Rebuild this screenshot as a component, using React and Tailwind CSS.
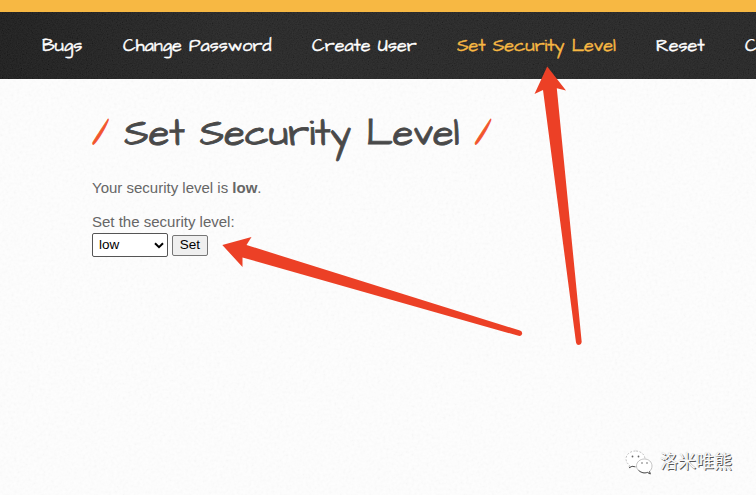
import React from "react";

const hand = "font-['Architects_Daughter','Lato',sans-serif]";

function Grain({ id, frequency, opacity }) {
  return (
    <svg className="pointer-events-none absolute inset-0 h-full w-full" style={{ opacity }} aria-hidden="true">
      <filter id={id}>
        <feTurbulence type="fractalNoise" baseFrequency={frequency} numOctaves="2" stitchTiles="stitch" />
        <feColorMatrix values="1.500 0 0 0 -0.25  1.500 0 0 0 -0.25  1.500 0 0 0 -0.25  0 0 0 0 1" />
      </filter>
      <rect width="100%" height="100%" filter={`url(#${id})`} />
    </svg>
  );
}

function Nav() {
  return (
    <nav className="relative h-[67px] overflow-hidden bg-linear-to-r from-[#181818] via-[#222222] via-30% to-[#212121]">
      <Grain id="nav-grain" frequency="0.8" opacity={0.08} />
      <ul className={`${hand} relative flex h-full items-center gap-10 pl-[42px] text-[18px] whitespace-nowrap text-white [-webkit-text-stroke:0.4px_currentColor]`}>
        <li className="w-[41px] shrink-0">Bugs</li>
        <li className="w-[149px] shrink-0">Change Password</li>
        <li className="w-[105px] shrink-0">Create User</li>
        <li className="w-[159px] shrink-0 text-[#f7b843]">Set Security Level</li>
        <li className="w-[49px] shrink-0">Reset</li>
        <li className="shrink-0">C</li>
      </ul>
    </nav>
  );
}

function Slash() {
  return <span className="text-[#f2552c]">/</span>;
}

function Arrows() {
  return (
    <svg className="pointer-events-none absolute inset-0" width="756" height="495" viewBox="0 0 756 495" fill="#ec4026" aria-hidden="true">
      <path d="M222.3 245 251.5 237 246.5 245 520 330.6Q522.8 331.8 522 334.2 521 336.5 518.5 335.8L242.5 257.5 242.5 267Z" />
      <path d="M547.2 66.5 566 90.5 556.8 88.3 581.7 342Q581.5 344.8 579 345 576.4 345 576 342.5L543 90 534.5 94Z" />
    </svg>
  );
}

function Watermark() {
  return (
    <div className="absolute top-[448px] left-[625px] flex items-start gap-[7px]">
      <svg width="28" height="27" viewBox="0 0 28 27" fill="#fff" stroke="#aaa" strokeWidth=".7" aria-hidden="true">
        <path d="M10.500 3C5.200 3 1 6.500 1 11c0 2.600 1.400 4.700 3.600 6.100L3.700 20l3.400-1.700c1.100.3 2.200.5 3.400.5 5.300 0 9.500-3.500 9.500-7.800S15.800 3 10.500 3Z" strokeDasharray="2 1.500" />
        <path d="M19.500 11c-4.500 0-8 3-8 6.900s3.500 7 8 7c1 0 2-.2 2.900-.5l2.900 1.600-.8-2.700c1.600-1.300 2.500-3.200 2.500-5.300 0-4-3.300-7-7.500-7Z" />
        <path d="M13.500 22.200c3.200 2.900 6 3.100 8.900 2.200l2.900 1.600-.8-2.700M4 19.800l3.100-1.500 3.300.5" fill="none" stroke="#444" strokeWidth=".9" />
        <g fill="#666" stroke="none">
          <circle cx="7.500" cy="8.500" r=".9" />
          <circle cx="13.500" cy="8.500" r=".9" />
          <circle cx="17" cy="15" r=".8" />
          <circle cx="22" cy="15" r=".8" />
        </g>
      </svg>
      <span className="font-['Noto_Sans_CJK_SC',sans-serif] text-[18px] leading-[24px] text-[#fafafa] [text-shadow:1px_1px_0_#555,0_0_1px_#bbb]">洛米唯熊</span>
    </div>
  );
}

export default function App() {
  return (
    <div className="relative h-[495px] w-[756px] overflow-hidden bg-[#fefefe] font-['Liberation_Sans',Arial,sans-serif]">
      <Grain id="paper-grain" frequency="0.35" opacity={0.022} />
      <div className="relative h-3 bg-[#f7b843]" />
      <Nav />
      <main className="relative pt-[32px] pl-[92px] text-[15px] text-[#666]">
        <h1 className={`${hand} flex h-[44px] items-center gap-[15px] pt-[2px] text-[38px] whitespace-nowrap text-[#494949] [-webkit-text-stroke:0.8px_currentColor]`}>
          <Slash />
          <span>Set Security Level</span>
          <Slash />
        </h1>
        <p className="mt-[24px] h-[18px] leading-[18px]">
          Your security level is <b>low</b>.
        </p>
        <p className="mt-[16px] h-[18px] leading-[18px]">Set the security level:</p>
        <div className="mt-[2px] flex items-center gap-1 text-[13.500px] text-black">
          <div className="flex h-6 w-[76px] items-center justify-between rounded-[2px] border border-[#555] bg-white pr-[3px] pl-[6px]">
            low
            <svg width="10" height="7" viewBox="0 0 10 7" fill="none" stroke="#000" strokeWidth="2" aria-hidden="true">
              <path d="m1 1.200 4 4 4-4" />
            </svg>
          </div>
          <button className="h-[21px] w-[36px] rounded-[2px] border border-[#767676] bg-[#efefef] leading-none">Set</button>
        </div>
      </main>
      <Arrows />
      <Watermark />
    </div>
  );
}
